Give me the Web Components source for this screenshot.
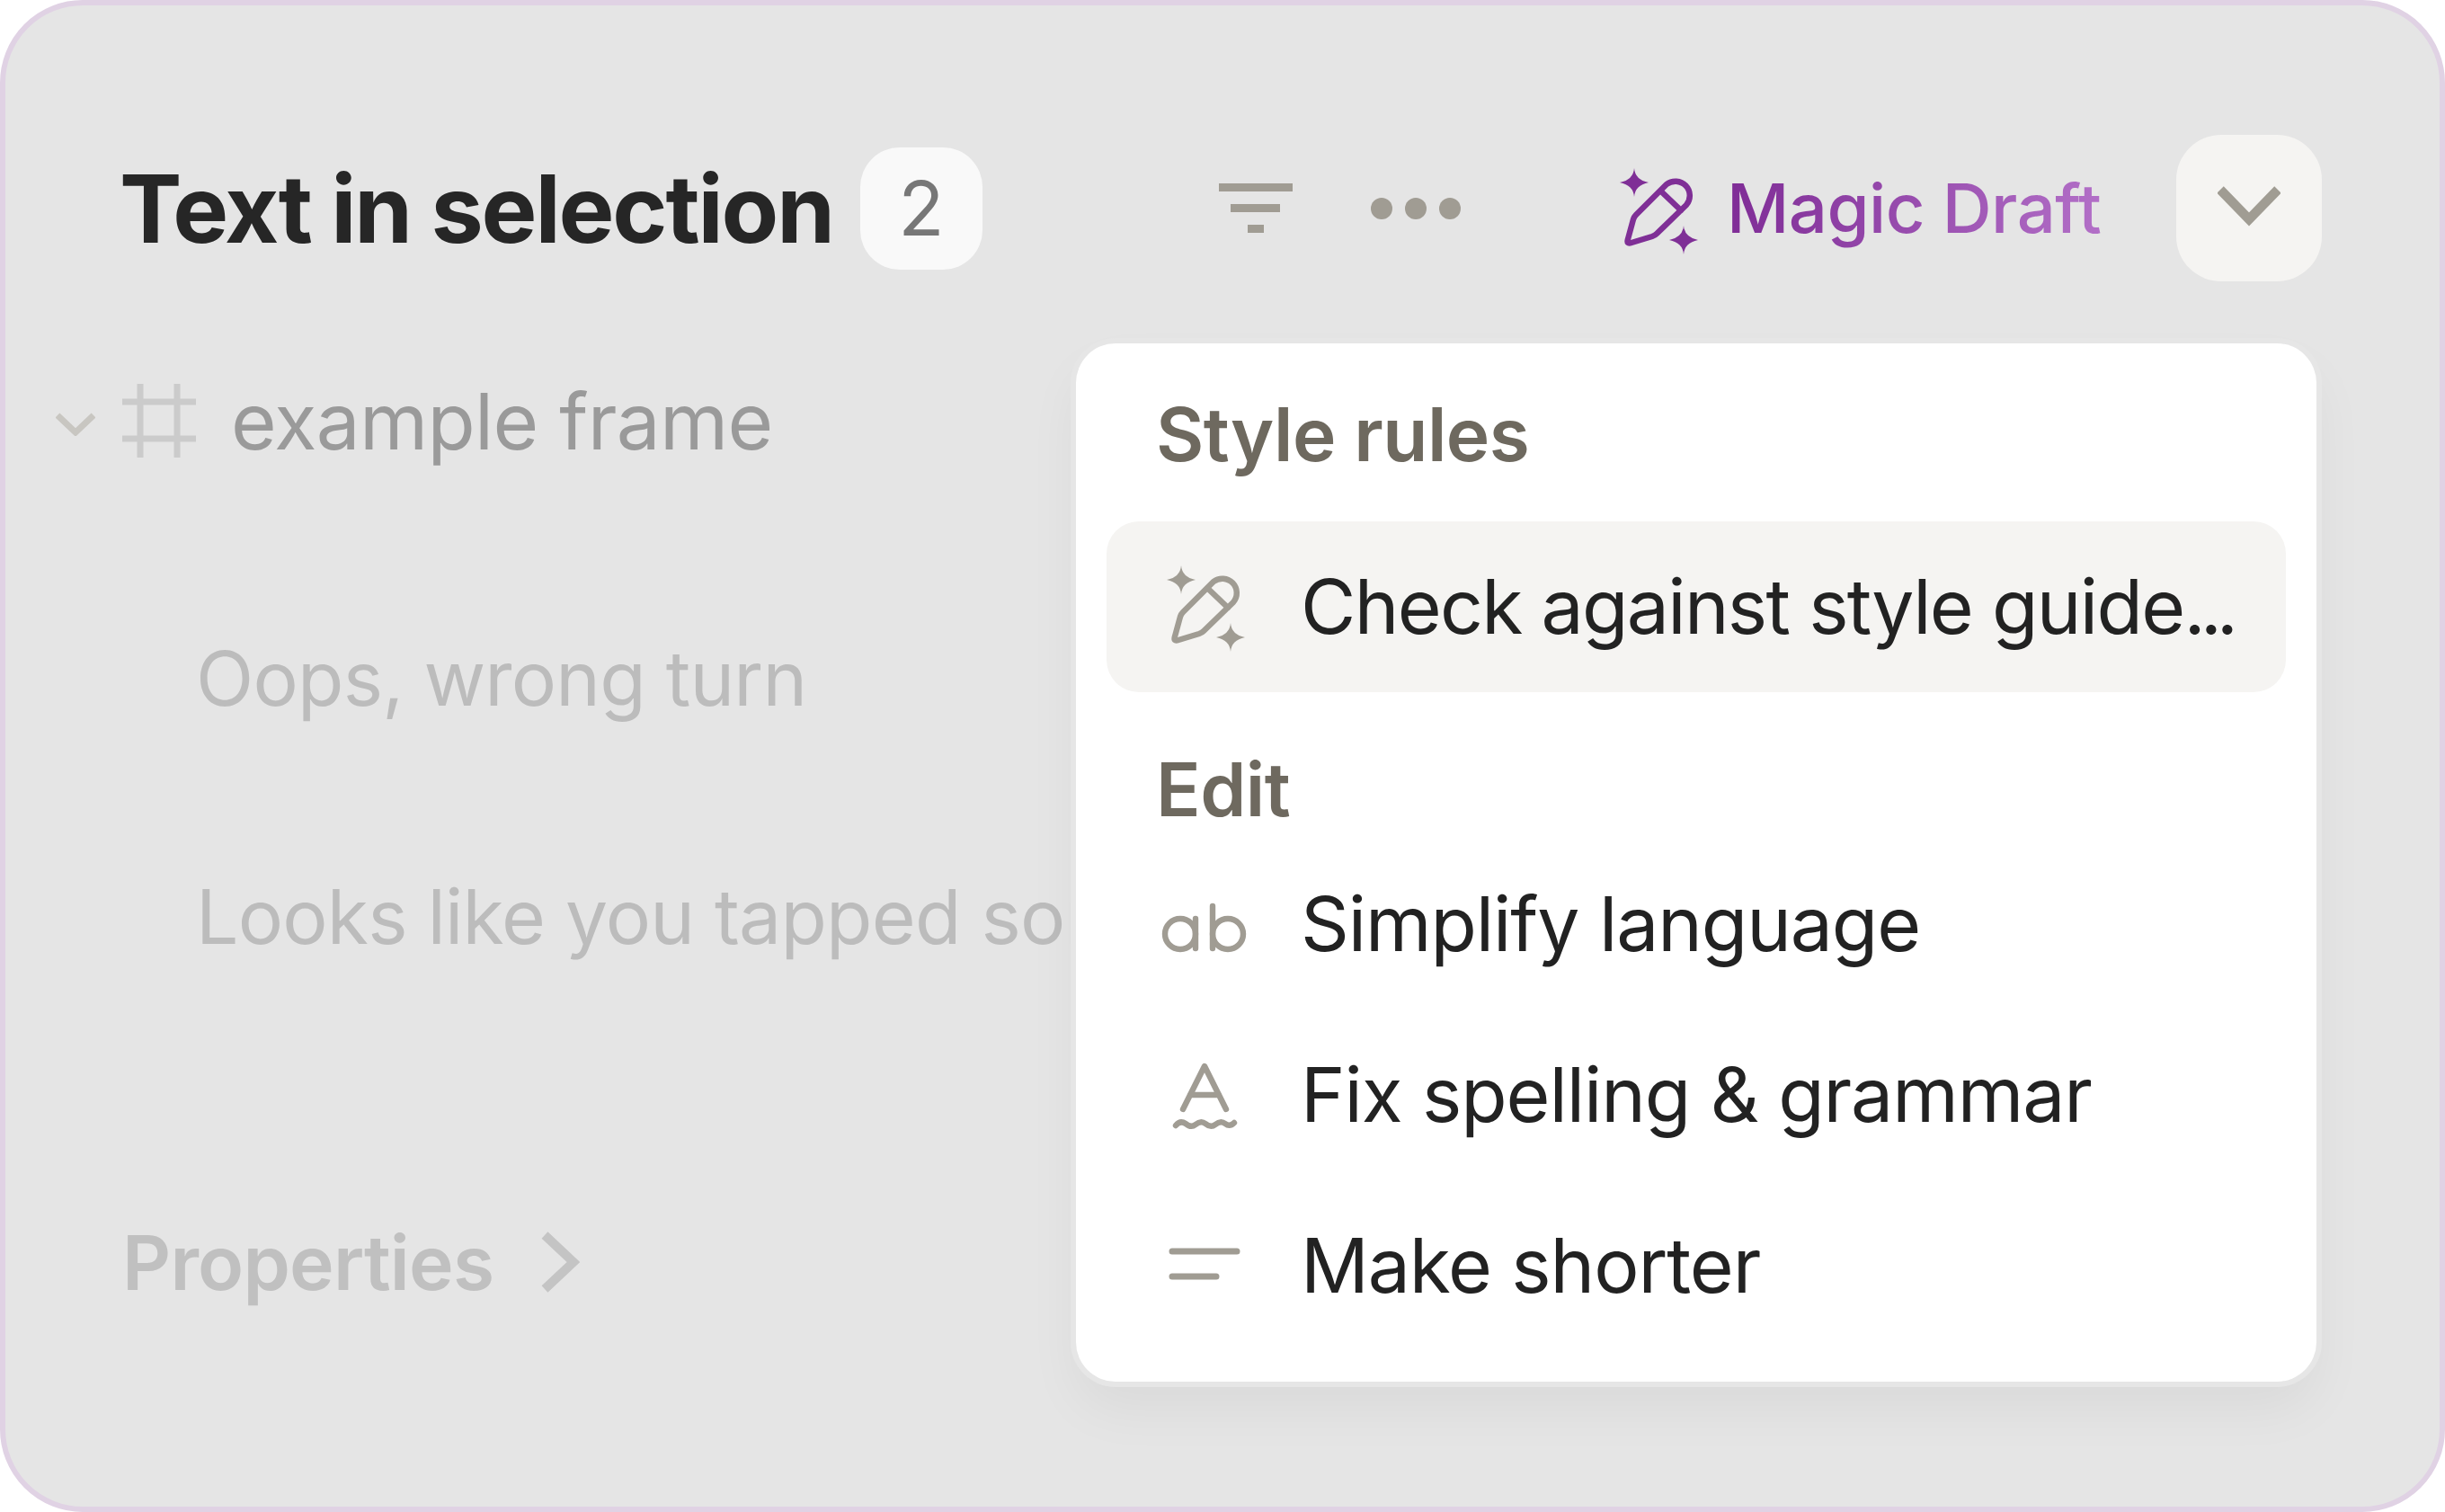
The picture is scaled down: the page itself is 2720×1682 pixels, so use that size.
<!DOCTYPE html>
<html lang="en">
<head>
<meta charset="utf-8">
<title>Text in selection</title>
<style>
  html, body { margin: 0; background: #fff; }
  body { width: 2720px; height: 1682px; overflow: hidden; font-family: Inter, "Liberation Sans", sans-serif; }
</style>
</head>
<body>
<selection-panel>
  <panel-header slot="header" count="2"></panel-header>
  <tree-row kind="frame">example frame</tree-row>
  <tree-row kind="text" style="margin-top:186px">Oops, wrong turn</tree-row>
  <tree-row kind="text" style="margin-top:165px">Looks like you tapped something</tree-row>
  <tree-row kind="props" style="margin-top:285px">Properties</tree-row>
  <action-menu slot="overlay">
    <menu-label style="margin-bottom:46px">Style rules</menu-label>
    <menu-item icon="magic" active style="letter-spacing:-1.7px">Check against style guide<span style="letter-spacing:-6px">...</span></menu-item>
    <menu-label style="margin-top:59px;margin-bottom:4px">Edit</menu-label>
    <menu-item icon="ab">Simplify language</menu-item>
    <menu-item icon="spell">Fix spelling &amp; grammar</menu-item>
    <menu-item icon="short">Make shorter</menu-item>
  </action-menu>
</selection-panel>

<script>
(function () {
  'use strict';

  var MAGIC =
    '<path d="M59 23 Q60 36 75 39 Q60 42 59 55 Q58 42 43 39 Q58 36 59 23Z" fill="currentColor"/>' +
    '<path d="M114 87 Q115 100 130 103 Q115 106 114 119 Q113 106 98 103 Q113 100 114 87Z" fill="currentColor"/>' +
    '<path d="M95 41 A16 16 0 0 1 117 64 L84 96 Q82 98 79 99 L56 106 Q50 108 52 102 L58 80 Q59 77 61 75Z M88 48 L111 70" fill="none" stroke="currentColor" stroke-width="6.5" stroke-linejoin="round" stroke-linecap="round"/>';

  var ICONS = {
    magic: '<svg width="160" height="130" viewBox="6 4 160 130">' + MAGIC + '</svg>',
    header: '<svg width="160" height="130" viewBox="0 0 160 130">' + MAGIC + '</svg>',
    ab: '<svg width="160" height="100" viewBox="0 -3 160 100" fill="none" stroke="currentColor" stroke-width="6.4" stroke-linecap="round">' +
      '<circle cx="52" cy="58" r="17"/><path d="M69 41V74"/>' +
      '<circle cx="105" cy="58" r="17"/><path d="M88 27V74"/></svg>',
    spell: '<svg width="160" height="120" viewBox="0 -3 160 120" fill="none" stroke="currentColor" stroke-width="6.4" stroke-linecap="round" stroke-linejoin="round">' +
      '<path d="M55 73 L79 25 L103 73 M63 57 H95"/>' +
      '<path d="M47 91 Q52 85 58 89 Q64 94 69 90 Q75 85 80 89 Q86 94 91 90 Q97 85 102 89 Q107 93 112 88"/></svg>',
    short: '<svg width="160" height="100" viewBox="0 0 160 100" fill="none" stroke="currentColor" stroke-width="7" stroke-linecap="round">' +
      '<path d="M43 34H115M43 62H92"/></svg>'
  };

  class SelectionPanel extends HTMLElement {
    connectedCallback() {
      var root = this.attachShadow({ mode: 'open' });
      root.innerHTML =
        '<style>' +
          ':host { display: block; position: relative; box-sizing: border-box; width: 2720px; height: 1682px;' +
            'background: #e5e5e5; border: 6px solid #e0d2e4; border-radius: 92px; overflow: hidden; }' +
          '.rows { display: flex; flex-direction: column; padding: 105px 0 0 0; }' +
        '</style>' +
        '<slot name="header"></slot>' +
        '<div class="rows"><slot></slot></div>' +
        '<slot name="overlay"></slot>';
    }
  }

  class PanelHeader extends HTMLElement {
    connectedCallback() {
      var root = this.attachShadow({ mode: 'open' });
      root.innerHTML =
        '<style>' +
          ':host { display: flex; align-items: center; padding: 144px 0 0 127px; height: 163px; }' +
          'h1 { margin: 0; font: 700 104px/1 Inter, sans-serif; letter-spacing: -2.1px; color: #262626; white-space: nowrap; }' +
          '.badge { display: flex; align-items: center; justify-content: center; width: 136px; height: 136px; margin-left: 30px;' +
            'background: #f9f9f9; border-radius: 44px; color: #777; font: 400 84px/1 Inter, sans-serif; }' +
          '.filter { display: flex; flex-direction: column; align-items: center; gap: 14px; width: 82px; margin-left: 263px; }' +
          '.filter i { display: block; height: 9px; background: #a09c93; }' +
          '.dots { display: flex; gap: 14px; margin-left: 87px; }' +
          '.dots i { display: block; width: 24px; height: 24px; border-radius: 50%; background: #a09c93; }' +
          '.magic { display: flex; align-items: center; margin-left: 134px; color: #7f2f96; }' +
          '.magic svg { display: block; margin-top: -5px; }' +
          '.magic span { margin-left: 2px; font: 500 76px/1.3 Inter, sans-serif; letter-spacing: -0.5px; white-space: nowrap;' +
            'background: linear-gradient(90deg, #7f2c96, #b26fc7); -webkit-background-clip: text; background-clip: text; color: transparent; }' +
          '.more { display: flex; align-items: center; justify-content: center; width: 162px; height: 163px; margin-left: 84px;' +
            'background: #f5f4f2; border-radius: 50px; color: #a09c93; }' +
          '.more svg { margin-bottom: 6px; }' +
        '</style>' +
        '<h1>Text in selection</h1>' +
        '<div class="badge">' + this.getAttribute('count') + '</div>' +
        '<div class="filter"><i style="width:82px"></i><i style="width:55px"></i><i style="width:18px"></i></div>' +
        '<div class="dots"><i></i><i></i><i></i></div>' +
        '<div class="magic">' + ICONS.header + '<span>Magic Draft</span></div>' +
        '<div class="more"><svg width="70" height="46" viewBox="0 0 70 46" fill="none" stroke="currentColor" stroke-width="10.5">' +
          '<path d="M3 5 L35 38 L67 5"/></svg></div>';
    }
  }

  class TreeRow extends HTMLElement {
    connectedCallback() {
      var kind = this.getAttribute('kind');
      var before = '';
      var after = '';
      if (kind === 'frame') {
        before =
          '<svg class="caret" width="44" height="26" viewBox="0 0 44 26" fill="none" stroke="#c8c6c1" stroke-width="7"><path d="M2 3 L22 22 L42 3"/></svg>' +
          '<svg class="hash" width="82" height="82" viewBox="0 0 82 82" fill="none" stroke="#cbcbcb" stroke-width="7"><path d="M20 0V82M61 0V82M0 20H82M0 61H82"/></svg>';
      }
      if (kind === 'props') {
        after = '<svg class="next" width="44" height="68" viewBox="0 0 44 68" fill="none" stroke="#c4c4c4" stroke-width="10"><path d="M5 4 L37 34 L5 64"/></svg>';
      }
      var root = this.attachShadow({ mode: 'open' });
      root.innerHTML =
        '<style>' +
          ':host { display: flex; align-items: center; height: 100px; white-space: nowrap; font-family: Inter, sans-serif; }' +
          ':host([kind="frame"]) { padding-left: 56px; color: #9a9a9a; font-size: 87px; letter-spacing: -0.7px; font-weight: 400; }' +
          ':host([kind="text"]) { padding-left: 212px; color: #bcbcbc; font-size: 84px; letter-spacing: -0.8px; font-weight: 400; }' +
          ':host([kind="props"]) { padding-left: 130px; color: #c0c0c0; font-size: 84px; letter-spacing: -0.8px; font-weight: 600; }' +
          '.caret { margin-top: 8px; }' +
          '.hash { margin-left: 30px; margin-right: 39px; }' +
          '.next { margin-left: 52px; }' +
        '</style>' + before + '<slot></slot>' + after;
    }
  }

  class ActionMenu extends HTMLElement {
    connectedCallback() {
      var root = this.attachShadow({ mode: 'open' });
      root.innerHTML =
        '<style>' +
          ':host { display: block; position: absolute; left: 1191px; top: 376px; box-sizing: border-box; width: 1380px; height: 1155px;' +
            'padding: 52px 34px 0; background: #fff; border-radius: 44px;' +
            'box-shadow: 0 0 0 6px #e6e6e6, 0 30px 60px rgba(0,0,0,.05); }' +
        '</style><slot></slot>';
    }
  }

  class MenuLabel extends HTMLElement {
    connectedCallback() {
      var root = this.attachShadow({ mode: 'open' });
      root.innerHTML =
        '<style>' +
          ':host { display: flex; align-items: center; height: 100px; padding-left: 55px;' +
            'color: #6e695f; font: 600 82px/1 Inter, sans-serif; letter-spacing: -0.5px; }' +
        '</style><slot></slot>';
    }
  }

  class MenuItem extends HTMLElement {
    connectedCallback() {
      var root = this.attachShadow({ mode: 'open' });
      root.innerHTML =
        '<style>' +
          ':host { display: flex; align-items: center; height: 190px; border-radius: 36px; white-space: nowrap;' +
            'color: #222; font: 400 84px/1 Inter, sans-serif; letter-spacing: -1.1px; }' +
          ':host([active]) { background: #f5f4f2; }' +
          '.icon { flex: none; display: flex; align-items: center; justify-content: center; width: 160px; height: 130px; margin: 0 26px 0 30px; color: #a09c93; }' +
          '.label { display: block; }' +
          'svg { display: block; }' +
        '</style>' +
        '<div class="icon">' + ICONS[this.getAttribute('icon')] + '</div><div class="label"><slot></slot></div>';
    }
  }

  customElements.define('selection-panel', SelectionPanel);
  customElements.define('panel-header', PanelHeader);
  customElements.define('tree-row', TreeRow);
  customElements.define('action-menu', ActionMenu);
  customElements.define('menu-label', MenuLabel);
  customElements.define('menu-item', MenuItem);
})();
</script>
</body>
</html>
